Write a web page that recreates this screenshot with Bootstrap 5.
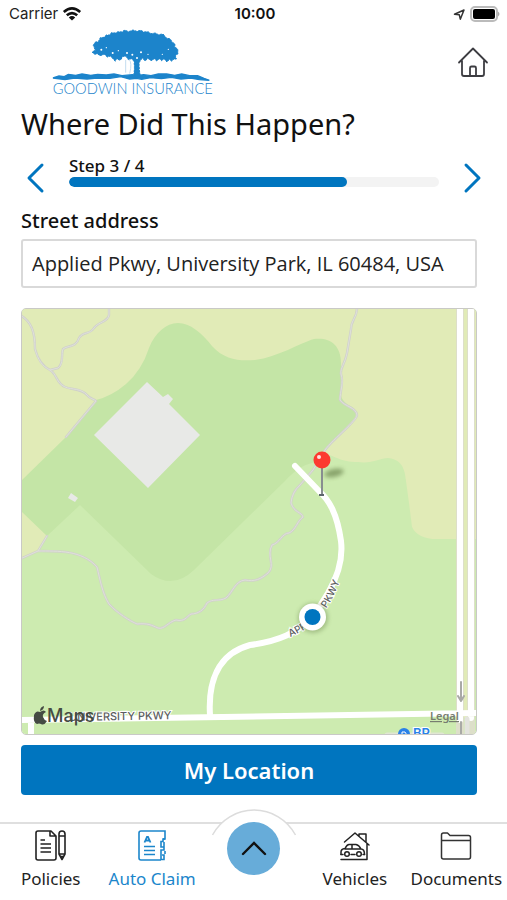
<!DOCTYPE html>
<html lang="en">
<head>
<meta charset="utf-8">
<meta name="viewport" content="width=device-width, initial-scale=1">
<title>Where Did This Happen?</title>
<link rel="stylesheet" href="https://cdn.jsdelivr.net/npm/bootstrap@5.3.0/dist/css/bootstrap.min.css">
<style>
  :root { --brand: #0075bf; --accent: #1c86cb; }
  body { font-family: "Noto Sans", "Open Sans", sans-serif; color: #111; background: #fff; }
  svg { display: block; }
  .status-bar { height: 28px; padding: 0 6px 0 9px; font: 15px/28px Inter, sans-serif; color: #222; }
  .status-side { flex: 1 1 0; }
  .status-bar time { font-weight: 600; color: #111; }
  .brand-row { padding: 0 18px 0 45px; height: 72px; }
  .brand-logo { margin-top: -3px; }
  .claim-body { padding: 2px 30px 0 21px; }
  .page-title { font-size: 29px; line-height: 44px; font-weight: 400; margin: 0 0 10px; }
  .step-row { margin: 0 -10px 11px 0; gap: 20px; }
  .step-btn { width: 28px; height: 40px; padding: 0; border: 0; background: none; }
  .step-label { font-size: 17px; line-height: 20px; font-weight: 500; }
  .step-track { height: 10px; border-radius: 5px; background: #f3f3f3; margin: 1px 0 9px; }
  .step-track .progress-bar { background: var(--brand); border-radius: 5px; }
  .field-label { font-size: 20px; line-height: 28px; font-weight: 500; margin-bottom: 4px; }
  .address-input { height: 49px; font-family: "Open Sans", sans-serif; font-size: 20px; padding: 0 9px; border: 2px solid #d9d9d9; border-radius: 3px; color: #222; }
  .map-box { margin-top: 20px; border: 1px solid #c9c9c6; border-radius: 5px; overflow: hidden; }
  .map-box svg { width: 100%; height: auto; }
  .locate-btn { margin-top: 10px; height: 50px; font-size: 22px; font-weight: 600; color: #fff; background: var(--brand); border-radius: 4px; padding: 0; }
  .locate-btn:hover { color: #fff; background: #0067a9; }
  .tab-bar { border-top: 2px solid #dfdfdf; height: 78px; }
  .tab-link { flex: 1 1 0; padding-top: 5px; font-size: 17px; line-height: 26px; color: #222; text-decoration: none; white-space: nowrap; }
  .tab-link svg { margin-bottom: 5px; }
  .tab-link.active { color: var(--accent); }
  .fab-slot { flex: 1 1 0; }
  .fab-arc { position: absolute; left: 50%; top: -15px; margin-left: -43px; }
  .fab-btn { position: relative; width: 53px; height: 53px; border: 0; padding: 0; border-radius: 50%; background: #67acd9; margin-top: -2px; }
</style>
</head>
<body>
<div class="d-flex flex-column min-vh-100">
  <div class="status-bar d-flex align-items-center">
    <div class="status-side d-flex align-items-center gap-1">
      <span>Carrier</span>
      <svg width="20" height="16" viewBox="0 0 20 16" fill="none" stroke="#111" stroke-width="2.6" aria-hidden="true"><path d="M1.8 6Q10-1.2 18.200 6"/><path d="M4.800 9.300Q10 4.800 15.200 9.300"/><path d="M10 14.500 6.800 11.400Q10 8.800 13.200 11.400Z" fill="#111" stroke="none"/></svg>
    </div>
    <time>10:00</time>
    <div class="status-side d-flex align-items-center justify-content-end gap-1">
      <svg width="13" height="13" viewBox="0 0 13 13" fill="none" stroke="#333" stroke-width="1.500" stroke-linejoin="round" aria-hidden="true"><path d="M1.500 6.300 11 2 7.300 11.200 6.300 6.800Z"/></svg>
      <svg width="31" height="16" viewBox="0 0 31 16" aria-hidden="true"><rect x="1" y="1" width="26" height="14" rx="4" fill="#fff" stroke="#bbb" stroke-width="2"/><rect x="3" y="3" width="22" height="10" rx="2" fill="#000"/><path d="M28 5.500Q31 8 28 10.500Z" fill="#aaa"/></svg>
    </div>
  </div>

  <header class="brand-row d-flex align-items-start justify-content-between">
    <svg class="brand-logo" width="175" height="75" viewBox="0 0 525 225" role="img" aria-label="Goodwin Insurance">
      <g fill="#1c84cb" stroke="#1c84cb">
        <path stroke-width="3" stroke-dasharray="7 3" stroke-linejoin="round" d="M145 61 151 51 160 50 166 38 177 37 184 30 194 30 199 23 212 24 219 20 232 21 238 15 251 20 264 15 275 19 288 16 296 21 309 20 318 26 331 24 340 29 354 27 364 39 376 42 381 51 390 57 389 66 398 72 399 86 391 92 394 102 384 103 381 109 373 103 366 111 357 101 350 107 343 101 335 108 329 101 318 107 309 100 300 108 293 99 286 106 282 115 283 135 286 153H266Q270 129 267 109L260 101 250 104 243 94 234 94 226 106 214 101 211 109 202 99 196 93 187 96 178 88 165 92 157 86 149 88 141 81 151 76Z"/>
        <path stroke-width="4" d="M24 159 42 153 58 155 70 148 92 151 111 147 137 151 158 148 184 150 207 147 231 152 262 149 274 152 296 149 318 152 340 147 365 147 389 151 410 147 434 152 458 152 477 160 493 166 463 164 437 159 408 162 379 157 349 161 317 158 290 163 275 160 254 162 227 155 195 160 156 159 126 162 89 159 60 164Z"/>
        <path fill="none" stroke="#a6cce8" stroke-width="2" d="M242 105V143M252 103Q262 113 254 146"/>
      </g>
      <g fill="#fff"><circle cx="169" cy="74" r="3"/><circle cx="184" cy="68" r="2"/><circle cx="203" cy="84" r="3"/><circle cx="220" cy="77" r="2"/><circle cx="246" cy="84" r="3"/><circle cx="262" cy="89" r="3"/><circle cx="288" cy="82" r="3"/><circle cx="276" cy="99" r="3"/><circle cx="309" cy="88" r="2"/><circle cx="352" cy="88" r="2"/><circle cx="370" cy="73" r="2"/></g>
      <text x="23" y="207" font-family="Lato, sans-serif" font-weight="300" font-size="44" fill="#1c84cb">GOODWIN INSURANCE</text>
    </svg>
    <a href="#home" aria-label="Home" class="mt-3">
      <svg width="32" height="34" viewBox="0 0 32 34" fill="none" stroke="#3d3d42" stroke-width="1.800" stroke-linecap="round" stroke-linejoin="round"><path d="M2 18.500 16 4.500 30 18.500M5 16.500V30Q5 32 7 32H25Q27 32 27 30V16.500M13 32V24Q13 22.500 14.500 22.500H17.500Q19 22.500 19 24V32"/></svg>
    </a>
  </header>

  <main class="claim-body">
    <h1 class="page-title">Where Did This Happen?</h1>
    <div class="step-row d-flex align-items-center">
      <button type="button" class="step-btn" aria-label="Previous step"><svg width="28" height="40" viewBox="0 0 28 40" fill="none" stroke="#0075bf" stroke-width="3" stroke-linecap="round" stroke-linejoin="round"><path d="M21 9 8 22 21 35"/></svg></button>
      <div class="flex-grow-1">
        <div class="step-label" id="step">Step 3 / 4</div>
        <div class="progress step-track" role="progressbar" aria-labelledby="step" aria-valuenow="75" aria-valuemin="0" aria-valuemax="100"><div class="progress-bar w-75"></div></div>
      </div>
      <button type="button" class="step-btn" aria-label="Next step"><svg width="28" height="40" viewBox="0 0 28 40" fill="none" stroke="#0075bf" stroke-width="3" stroke-linecap="round" stroke-linejoin="round"><path d="M7 9 20 22 7 35"/></svg></button>
    </div>
    <label for="address" class="field-label d-block">Street address</label>
    <input id="address" type="text" class="form-control address-input" value="Applied Pkwy, University Park, IL 60484, USA">

    <div class="map-box">
      <svg viewBox="22 309 454 425" role="img" aria-label="Map of Applied Pkwy">
        <defs><filter id="soft" x="-50%" y="-50%" width="200%" height="200%"><feGaussianBlur stdDeviation="2"/></filter></defs>
        <path fill="#cdebb0" d="M20 300H480V740H20Z"/>
        <path fill="#e1ebb7" d="M20 300H480V539H440Q418 540 412 527L409 503 405 474Q402 459 388 458C380 458 372 464 358 462 340 462 336 456 325 454L20 482ZM462 530H471V718H462ZM20 509 47 535 38 552 20 558Z"/>
        <path fill="#c4e5a6" d="M20 482 66 437 96 400Q112 396 126 384 142 370 149 348C155 333 166 323 178 323 190 323 202 333 212 346 225 360 238 361 255 360 278 357 300 343 314 339 330 337 342 345 341 366L341 396Q343 403 352 407 360 413 352 421L325 451 317 462Q300 464 285 481L194 570Q173 590 151 574L80 505 47 536 20 510Z"/>
        <path fill="#e8e9e7" d="M147 382 163 397 168 394 173 399 169 404 200 435 148 488 94 435ZM71 493 78 498 75 502 68 498Z"/>
        <g fill="none" stroke-linejoin="round" stroke-linecap="round">
          <g stroke="#d0d1ca" stroke-width="2.400">
            <path id="trail" d="M20 315C31 321 35 331 35 349 38 360 42 366 50 370 57 374 56 383 65 387 72 390 81 388 87 395 90 399 94 399 96 401L66 437M109 308V315C108 322 98 322 94 328 90 335 83 331 79 338 76 348 68 345 63 349 61 354 64 364 58 368L50 370M357 308C357 318 351 320 351 329L347 353C345 364 340 368 341 374 344 383 340 391 340 400 345 407 356 407 357 415 357 421 334 438 325 450L313 470 300 485Q292 492 291 503C294 513 302 512 303 517 297 521 296 530 289 533 282 533 280 543 272 545 266 556 276 565 268 573 261 579 255 582 245 580 235 581 233 592 226 598 219 602 213 598 207 603 204 610 198 614 191 614 186 617 185 622 176 620 168 622 164 630 158 628 151 625 148 623 137 624 130 621 117 613 109 604 102 593 100 579 97 567 82 550 58 551 38 551L20 559M38 551 47 536"/>
          </g>
          <use href="#trail" stroke="#dfe0da" stroke-width="1"/>
          <path stroke="#dddfc9" stroke-width="8" d="M460 300V740M471 300V740"/>
          <path stroke="#fff" stroke-width="6" d="M460 300V720M471 300V718M16 720 480 713M31 720V740M210 715C208 683 217 654 250 645 280 641 296 633 313 617L328 593Q344 566 341 541C337 513 329 500 319 491L295 466"/>
          <path stroke="#e3e3de" stroke-width="5" d="M467 719V740"/>
          <path stroke="#a9a9a6" stroke-width="2" d="M461 682V700M458 696 461 701 464 696M461 722V740"/>
          <path stroke="#e0e6d2" stroke-width="5" d="M387 735H442"/>
          <path id="road-label" d="M290 637Q306 630 316 621 336 600 344 567"/>
        </g>
        <g font-family="Inter, sans-serif" font-weight="500" font-size="10" fill="#5c5e60" stroke="#fff" stroke-width="2" paint-order="stroke">
          <text><textPath href="#road-label">APPLIED&#160; PKWY</textPath></text>
          <text x="69" y="721" font-size="11" transform="rotate(-1 69 721)">UNIVERSITY PKWY</text>
        </g>
        <g fill="#454b43">
          <path d="M40 712Q44 709 46 712 42 714 43 717 44 720 47 721 44 726 41 724 39 723 37 724 33 723 34 715 36 710 40 712ZM40 711Q40 707 44 706 44 710 40 711Z"/>
          <text x="47" y="722" font-family="Inter, sans-serif" font-weight="500" font-size="18">Maps</text>
        </g>
        <a href="#legal"><text x="430" y="720" font-family="Noto Sans, sans-serif" font-weight="600" font-size="11" fill="#777d70" text-decoration="underline">Legal</text></a>
        <circle cx="404" cy="734" r="6" fill="#2a81e8"/><path d="M402 736V732H405Q407 734 405 735H402" stroke="#fff" fill="none"/>
        <text x="413" y="738" font-family="Inter, sans-serif" font-weight="600" font-size="13" fill="#2a81e8" stroke="#fff" stroke-width="2" paint-order="stroke">BP</text>
        <ellipse cx="334" cy="473" rx="10" ry="4" fill="#526b36" opacity=".55" filter="url(#soft)" transform="rotate(-12 334 473)"/>
        <path d="M322 465V494" stroke="#888d90" stroke-width="2"/><path d="M319 495H324" stroke="#5d666d" stroke-width="2"/>
        <circle cx="322" cy="460" r="8.500" fill="#fc3a30"/><circle cx="319" cy="457" r="2" fill="#fff" opacity=".85"/>
        <circle cx="313" cy="618" r="15" fill="#526b36" opacity=".35" filter="url(#soft)"/>
        <circle cx="312.500" cy="617" r="13.500" fill="#fff"/><circle cx="312.500" cy="617" r="8" fill="#0075bf"/>
      </svg>
    </div>
    <button type="button" class="btn w-100 locate-btn">My Location</button>
  </main>

  <nav class="tab-bar d-flex mt-auto position-relative" aria-label="Main">
    <a href="#policies" class="tab-link d-flex flex-column align-items-center">
      <svg width="32" height="32" viewBox="0 0 32 32" fill="none" stroke="#222" stroke-width="1.600" stroke-linejoin="round"><path d="M3 2H16L21 7V29Q21 31 19 31H3Q1 31 1 29V4Q1 2 3 2ZM15 2V7H21M5.500 11H10M5.500 15H16M5.500 19H16M5.500 23H16M24 5Q24 2 27 2T30 5V25L27 30.500 24 25ZM24 7H30M24 25H30M26 27.500H28"/></svg>
      <span>Policies</span>
    </a>
    <a href="#claim" class="tab-link active d-flex flex-column align-items-center" aria-current="page">
      <svg width="28" height="32" viewBox="0 0 28 32" fill="none" stroke="#1c86cb" stroke-width="1.600"><path d="M23 31H3Q1 31 1 29V4Q1 2 3 2H27V10H25V12.500H23V18H26V21H23V31M26 9V11M26 13V18M27 22V25M24 26H26V30.500H23M6 17.500H17M6 21.500H17M6 25.500H17"/><path d="M6.500 13.500 9 8H10L12.500 13.500M7.500 11.500H11.500" stroke-width="1.800"/></svg>
      <span>Auto Claim</span>
    </a>
    <div class="fab-slot d-flex justify-content-center align-items-start">
      <svg class="fab-arc" width="86" height="27" viewBox="0 0 86 27" aria-hidden="true"><path d="M1.500 26A47 47 0 0 1 84.500 26" fill="#fff" stroke="#dcdcdc" stroke-width="1.500"/></svg>
      <button type="button" class="fab-btn" aria-label="Open menu"><svg class="mx-auto" width="28" height="18" viewBox="0 0 28 18" fill="none" stroke="#111" stroke-width="2.400" stroke-linecap="round"><path d="M3 14 14 3 25 14"/></svg></button>
    </div>
    <a href="#vehicles" class="tab-link d-flex flex-column align-items-center">
      <svg width="32" height="32" viewBox="0 0 32 32" fill="none" stroke="#222" stroke-width="1.500" stroke-linecap="round" stroke-linejoin="round"><path d="M5.500 13 16 4 30 16M20 7V5H27V13M28 14.500V30.500H2M2 25.500V23Q2 20 6 19.500 8 15.500 10 15.500H17Q20 16 22 20 25.500 20 25.500 25.500M6 20H22M13 16V20"/><circle cx="8" cy="25" r="2.300"/><circle cx="20" cy="25" r="2.300"/><path d="M12 25.500H16M2 25.500H4M24 25.500H25.500"/></svg>
      <span>Vehicles</span>
    </a>
    <a href="#documents" class="tab-link d-flex flex-column align-items-center">
      <svg width="32" height="32" viewBox="0 0 32 32" fill="none" stroke="#333" stroke-width="1.500" stroke-linejoin="round"><path d="M1.500 28V6Q1.500 4 3.500 4H7.500L10 6.500H28.500Q30.500 6.500 30.500 8.500V28Q30.500 30 28.500 30H3.500Q1.500 30 1.500 28ZM1.500 11.500H30.500"/></svg>
      <span>Documents</span>
    </a>
  </nav>
</div>
<script src="https://cdn.jsdelivr.net/npm/bootstrap@5.3.0/dist/js/bootstrap.bundle.min.js"></script>
</body>
</html>
